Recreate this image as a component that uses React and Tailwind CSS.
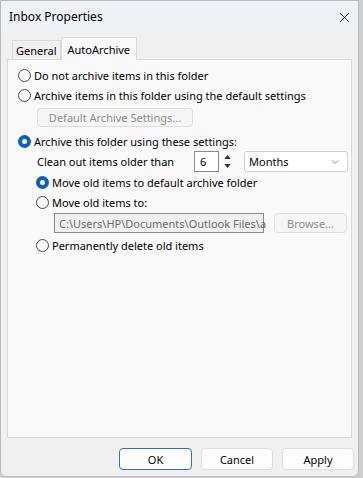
import { X, ChevronDown } from 'lucide-react'

const font = { fontFamily: '"Noto Sans", "Open Sans", sans-serif' }

function Radio({ checked }) {
  return checked ? (
    <span className="w-[13px] h-[13px] rounded-full bg-[#0a5fbf] flex items-center justify-center shrink-0">
      <span className="w-[5px] h-[5px] rounded-full bg-white" />
    </span>
  ) : (
    <span className="w-[13px] h-[13px] rounded-full border border-[#4a4a4a] bg-[#fafafa] shrink-0" />
  )
}

function Option({ checked, label, className = '' }) {
  return (
    <div className={`flex items-center gap-[3px] h-[20px] ${className}`}>
      <Radio checked={checked} />
      <span className="text-black">{label}</span>
    </div>
  )
}

function Button({ children, primary, disabled, className = '' }) {
  return (
    <div
      className={`flex items-center justify-center rounded-[4px] border ${
        primary ? 'border-[#2f6fbf]' : 'border-[#dedede]'
      } ${disabled ? 'text-[#8c8c8c] bg-[#f6f6f6]' : 'text-black bg-[#fdfdfd]'} ${className}`}
    >
      {children}
    </div>
  )
}

export default function App() {
  return (
    <div className="w-[363px] h-[478px] bg-[#cfcfcf] text-[11px] leading-none" style={font}>
      <div className="w-[359px] h-[477px] bg-[#f0f0f0] border border-[#b9b9b9] rounded-b-[6px] flex flex-col">
        {/* Title bar */}
        <div className="h-[32px] bg-[#eef1f6] flex items-center justify-between pl-[8px] pr-[5px]">
          <span className="text-[12px] text-black">Inbox Properties</span>
          <X size={17} strokeWidth={1.1} className="text-black" />
        </div>

        {/* Tabs */}
        <div className="flex items-end h-[26px] pl-[11px]">
          <div className="h-[19px] px-[3px] flex items-center border border-b-0 border-[#d9d9d9] bg-[#f0f0f0] text-black">General</div>
          <div className="h-[23px] px-[6px] flex items-center border border-b-0 border-[#d9d9d9] bg-[#f9f9f9] text-black -mb-px relative z-10">AutoArchive</div>
        </div>

        {/* Panel */}
        <div className="mx-[6px] h-[379px] border border-[#d9d9d9] bg-[#f9f9f9] pl-[10px] pt-[5px]">
          <Option label="Do not archive items in this folder" />
          <Option label="Archive items in this folder using the default settings" />
          <Button disabled className="ml-[19px] mt-[3px] w-[156px] h-[19px]">Default Archive Settings...</Button>
          <Option checked label="Archive this folder using these settings:" className="mt-[4px]" />

          <div className="flex items-center ml-[19px] h-[21px]">
            <span className="w-[157px]">Clean out items older than</span>
            <div className="w-[25px] h-[21px] border border-[#8a8a8a] bg-white flex items-center pl-[5px]">6</div>
            <div className="w-[14px] h-[21px] ml-[1px] flex flex-col items-center justify-center">
              <svg width="7" height="4" viewBox="0 0 8 5"><path d="M4 0 L8 5 L0 5 Z" fill="#333" /></svg>
              <div className="h-[5px]" />
              <svg width="7" height="4" viewBox="0 0 8 5"><path d="M0 0 L8 0 L4 5 Z" fill="#333" /></svg>
            </div>
            <div className="ml-[10px] w-[104px] h-[21px] border border-[#cfcfcf] bg-white rounded-[3px] flex items-center justify-between pl-[4px] pr-[6px]">
              <span>Months</span>
              <ChevronDown size={12} strokeWidth={1.3} className="text-[#555]" />
            </div>
          </div>

          <div className="ml-[18px]">
            <Option checked label="Move old items to default archive folder" />
            <Option label="Move old items to:" />
            <div className="flex items-center ml-[18px] mt-[1px] h-[20px]">
              <div className="w-[210px] h-[20px] border border-[#8a8a8a] bg-[#f0f0f0] text-[#6d6d6d] flex items-center pl-[4px] whitespace-nowrap">
                C:\Users\HP\Documents\Outlook Files\a
              </div>
              <Button disabled className="ml-[10px] w-[73px] h-[20px]">Browse...</Button>
            </div>
            <Option label="Permanently delete old items" className="mt-[2px]" />
          </div>
        </div>

        {/* Footer */}
        <div className="flex justify-end gap-[9px] pr-[4px] mt-[10px]">
          <Button primary className="w-[73px] h-[22px]">OK</Button>
          <Button className="w-[72px] h-[22px]">Cancel</Button>
          <Button className="w-[72px] h-[22px]">Apply</Button>
        </div>
      </div>
    </div>
  )
}
